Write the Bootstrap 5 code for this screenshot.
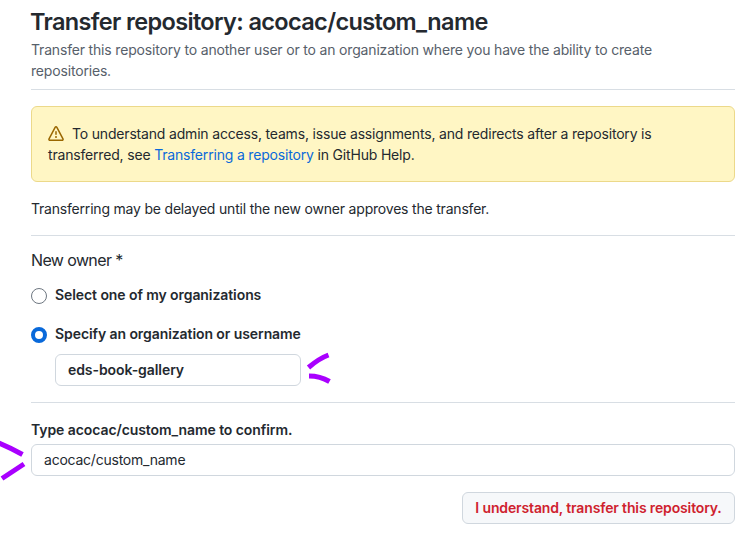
<!DOCTYPE html>
<html lang="en">
<head>
<meta charset="utf-8">
<meta name="viewport" content="width=device-width, initial-scale=1">
<title>Transfer repository</title>
<link href="https://cdn.jsdelivr.net/npm/bootstrap@5.3.0/dist/css/bootstrap.min.css" rel="stylesheet">
<style>
body{font-family:Inter,"Liberation Sans",sans-serif;font-size:14px;line-height:21px;letter-spacing:-.18px;color:#24292f;background:#fff;overflow:hidden}
.page{padding:4px 20px 0 31px}
.title{font-size:23.5px;line-height:35px;font-weight:600;letter-spacing:-.64px;margin-left:-1px}
.lede{color:#57606a;letter-spacing:-.175px}
.rule{border-bottom:1px solid #d8dee4}
.page-head{height:86px}
.flash{margin-top:16px;background:#fff6c4;border:1px solid #ecd98a;border-radius:6px;padding:16px;height:76px}
.flash svg{fill:#9a6700;margin-right:8px;vertical-align:-3px}
.flash a{color:#0969da}
.delay-note{height:54px;padding-top:16px;letter-spacing:-.2px}
.owner-group{height:167px;padding-top:12px}
.owner-title{font-size:16px;line-height:24px;margin-bottom:12px;letter-spacing:-.62px}
.choice{height:39px}
.dot{width:16px;height:16px;margin:4px 0 0;border:1px solid #6e7781;flex:none}
.dot:checked{background:#fff;border:4.5px solid #0969da}
.strong-text{font-weight:600;letter-spacing:-.08px}
.field.form-control{height:32px;border:1px solid #d0d7de;border-radius:6px;font-size:14px;line-height:20px;padding:4px 12px 6px;color:#24292f;letter-spacing:-.23px}
.name-field.form-control{width:246px;font-weight:600;margin:-8px 0 0 24px;letter-spacing:-.07px}
.confirm{padding-top:16px}
.confirm-label{margin-bottom:4px}
.submit.btn{width:273px;height:32px;margin-top:16px;font-size:14px;line-height:20px;padding:5px 0;background:#f6f8fa;border:1px solid #d0d7de;border-radius:6px;color:#cf222e;font-weight:600;letter-spacing:-.14px}
.ink{fill:none;stroke:#a900ff;stroke-width:5}
.ink-owner{left:305px;top:350px}
.ink-confirm{left:0;top:438px}
</style>
</head>
<body>
<main class="page">
  <header class="page-head rule">
    <h1 class="title mb-0">Transfer repository: acocac/custom_name</h1>
    <p class="lede mb-0">Transfer this repository to another user or to an organization where you have the ability to create<br>repositories.</p>
  </header>
  <div class="flash"><svg width="16" height="16" viewBox="0 0 16 16" aria-hidden="true"><path fill-rule="evenodd" d="M8.22 1.754a.25.25 0 00-.44 0L1.698 13.132a.25.25 0 00.22.368h12.164a.25.25 0 00.22-.368L8.22 1.754zm-1.763-.707c.659-1.234 2.427-1.234 3.086 0l6.082 11.378A1.75 1.75 0 0114.082 15H1.918a1.75 1.75 0 01-1.543-2.575L6.457 1.047zM9 11a1 1 0 11-2 0 1 1 0 012 0zm-.25-5.25a.75.75 0 00-1.5 0v2.5a.75.75 0 001.5 0v-2.5z"/></svg>To understand admin access, teams, issue assignments, and redirects after a repository is<br>transferred, see <a class="text-decoration-none" href="#">Transferring a repository</a> in GitHub Help.</div>
  <p class="delay-note rule mb-0">Transferring may be delayed until the new owner approves the transfer.</p>
  <form>
    <section class="owner-group rule">
      <h2 class="owner-title fw-normal">New owner *</h2>
      <div class="choice d-flex align-items-start gap-2">
        <input class="dot form-check-input" type="radio" name="owner" id="mine">
        <label class="strong-text" for="mine">Select one of my organizations</label>
      </div>
      <div class="choice d-flex align-items-start gap-2">
        <input class="dot form-check-input" type="radio" name="owner" id="other" checked>
        <label class="strong-text" for="other">Specify an organization or username</label>
      </div>
      <input class="field name-field form-control" type="text" value="eds-book-gallery" aria-label="Organization or username">
    </section>
    <section class="confirm">
      <label class="strong-text confirm-label d-block" for="confirm">Type acocac/custom_name to confirm.</label>
      <input class="field form-control" type="text" id="confirm" value="acocac/custom_name">
      <div class="d-flex justify-content-end">
        <button class="submit btn" type="button">I understand, transfer this repository.</button>
      </div>
    </section>
  </form>
</main>
<svg class="ink ink-owner position-absolute" width="28" height="36" viewBox="305 350 28 36" aria-hidden="true"><path d="M308.5 367.5Q319 358.5 328.5 355M309 376Q320 376 329.5 381.5"/></svg>
<svg class="ink ink-confirm position-absolute" width="28" height="44" viewBox="0 438 28 44" aria-hidden="true"><path d="M-1 443Q10 447.500 22.500 454.500M2 478.500L24 464"/></svg>
<script src="https://cdn.jsdelivr.net/npm/bootstrap@5.3.0/dist/js/bootstrap.bundle.min.js"></script>
</body>
</html>
